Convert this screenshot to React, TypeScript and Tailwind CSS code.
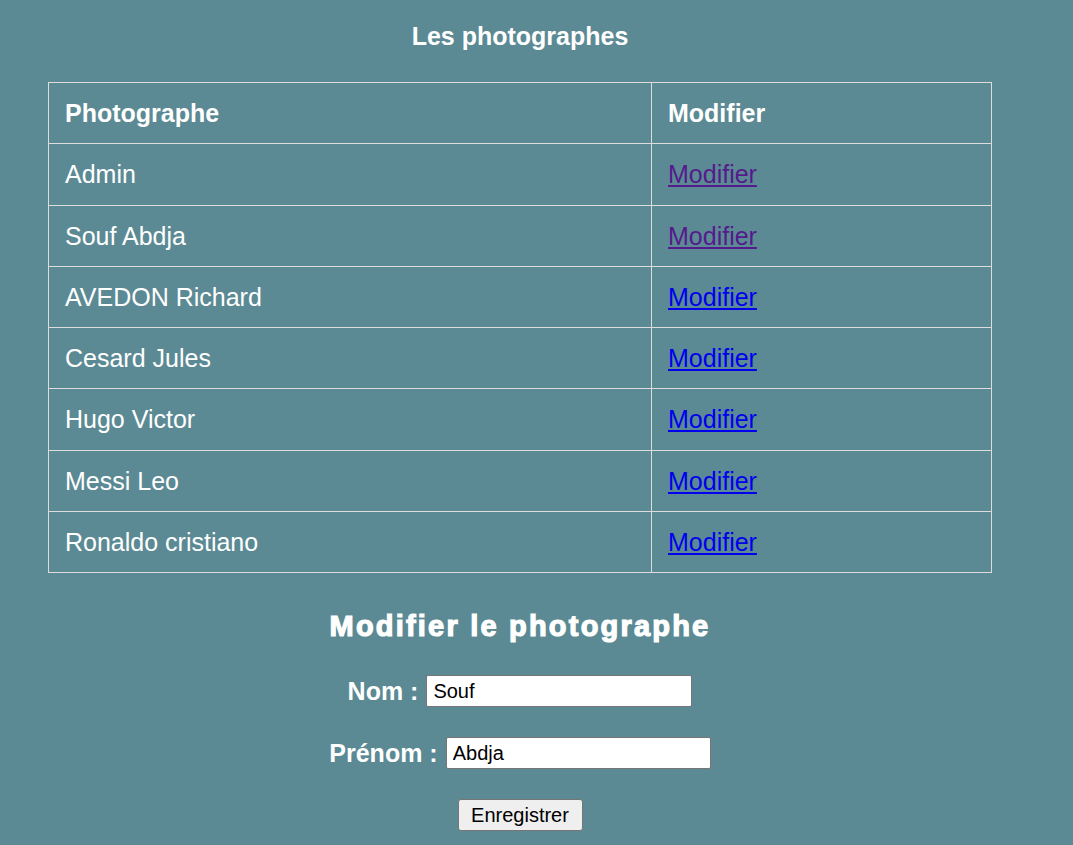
const photographes = [
  { name: 'Admin', visited: true },
  { name: 'Souf Abdja', visited: true },
  { name: 'AVEDON Richard', visited: false },
  { name: 'Cesard Jules', visited: false },
  { name: 'Hugo Victor', visited: false },
  { name: 'Messi Leo', visited: false },
  { name: 'Ronaldo cristiano', visited: false },
];

export default function App() {
  return (
    <div
      className="min-h-[845px] bg-[#5b8a94] text-white pt-[22px]"
      style={{ fontFamily: '"Liberation Sans", Arial, sans-serif' }}
    >
      <div className="ml-[48px] w-[944px]">
        <h1 className="text-center text-[25px] font-bold leading-[29px]">Les photographes</h1>

        <table className="mt-[31px] w-[944px] border-collapse border border-[#ddd] text-[25px] leading-[28.25px]">
          <thead>
            <tr>
              <th className="w-[603px] border border-[#ddd] p-4 text-left font-bold">Photographe</th>
              <th className="border border-[#ddd] p-4 text-left font-bold">Modifier</th>
            </tr>
          </thead>
          <tbody>
            {photographes.map((p) => (
              <tr key={p.name}>
                <td className="border border-[#ddd] p-4">{p.name}</td>
                <td className="border border-[#ddd] p-4">
                  <a
                    href="#"
                    className={p.visited ? 'text-[#551a8b] underline' : 'text-[#0000ee] underline'}
                  >
                    Modifier
                  </a>
                </td>
              </tr>
            ))}
          </tbody>
        </table>

        {/* Formulaire */}
        <div className="flex flex-col items-center">
          <h2 className="mt-[37px] text-[29px] font-black leading-[33px] tracking-[2.2px] [-webkit-text-stroke:1.2px_white]">
            Modifier le photographe
          </h2>

          <div className="mt-[32px] flex items-center gap-[8px]">
            <label className="text-[25px] font-bold leading-[29px]">Nom :</label>
            <input
              defaultValue="Souf"
              className="h-[32px] w-[266px] rounded-[2px] border border-[#767676] bg-white px-[6px] text-[20px] text-black"
            />
          </div>

          <div className="mt-[30px] flex items-center gap-[8px]">
            <label className="text-[25px] font-bold leading-[29px]">Prénom :</label>
            <input
              defaultValue="Abdja"
              className="h-[32px] w-[265px] rounded-[2px] border border-[#767676] bg-white px-[6px] text-[20px] text-black"
            />
          </div>

          <button className="mt-[30px] h-[32px] w-[125px] rounded-[3px] border border-[#767676] bg-[#efefef] text-[20px] text-black">
            Enregistrer
          </button>
        </div>
      </div>
    </div>
  );
}
